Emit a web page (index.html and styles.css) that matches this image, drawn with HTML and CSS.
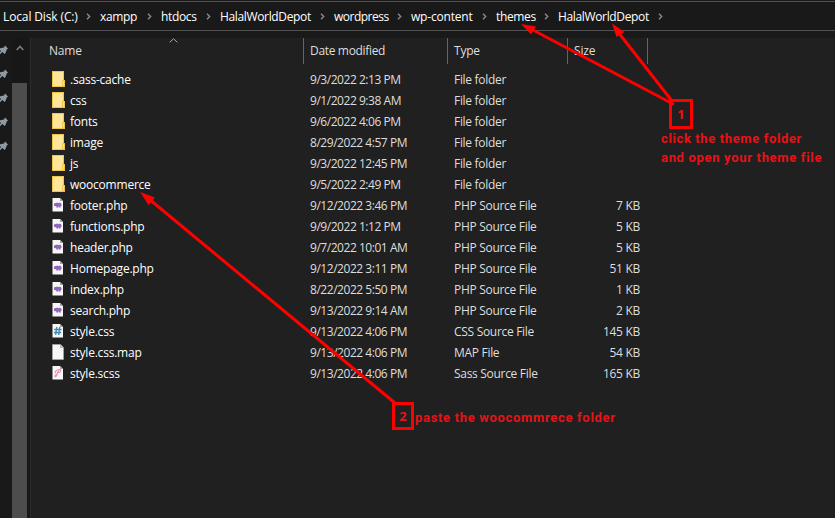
FILE: index.html
```html
<!DOCTYPE html>
<html lang="en">
<head>
<meta charset="utf-8">
<title>HalalWorldDepot</title>
<link rel="stylesheet" href="styles.css">
</head>
<body>
<svg class="defs" width="0" height="0">
  <symbol id="folder" viewBox="0 0 14 16"><path d="M0 0H12V9H13V16H0Z" fill="#f0c64a"/><path d="M1 1H11V15H1Z" fill="#ffe597"/><path d="M10.5 9.5H12.5V15H10.5Z" fill="#ffe08a" stroke="#e8bb3e" stroke-width=".7"/></symbol>
  <symbol id="page" viewBox="0 0 14 16"><path d="M.5 1H8L11 4V14.500H.5Z" fill="#f7f7f9"/><path d="M8 1V4H11Z" fill="#a2a2a6"/></symbol>
  <symbol id="php" viewBox="0 0 14 16"><use href="#page"/><path d="M2 7.300Q2 5.600 4 6Q5 5.200 6 6.100Q9 5.300 9.500 7.300V9H8.700V10.500H6.800V9.500H6.200V10.500H4.300V9.300H3.300V9H2Z" fill="#9068b8"/></symbol>
  <symbol id="css" viewBox="0 0 14 16"><use href="#page"/><path d="M4.700 4L3.700 12M7.700 4L6.700 12M2.300 6.500H9.500M2 9.500H9.200" fill="none" stroke="#3f88ab" stroke-width="1.300"/></symbol>
  <symbol id="map" viewBox="0 0 14 16"><path d="M.5 .5H8.500L11.500 3.500V15.500H.5Z" fill="#f7f7f7" stroke="#aaa" stroke-width=".7"/><path d="M8.500 .5V3.500H11.500" fill="#ccc" stroke="#999" stroke-width=".7"/></symbol>
  <symbol id="sass" viewBox="0 0 14 16"><use href="#page"/><path d="M4 8C2 7 4.500 4.500 7.500 4.500C10 5 8.500 7.500 6 7.500M6.500 5.500L5 9C5.500 10.500 4 12 3 11.500C2.500 10.500 3.800 9.800 5 9.300" fill="none" stroke="#f08aaa" stroke-width="1.100"/></symbol>
  <symbol id="pin" viewBox="0 0 9 11"><path d="M5 .5L8 3.500L6.800 4.500L5.500 8L4.500 9L2.500 7L-1 10L-1 8.500L1 6L-1 4L1 3L4 2.500Z" fill="#8e99a4"/></symbol>
  <symbol id="chev" viewBox="0 0 5 7"><path d="M1 .7L3.700 3.500L1 6.300" fill="none" stroke="#8a8a8a" stroke-width="1.400"/></symbol>
</svg>
<div class="window">
  <nav class="address">
    <span class="crumb c1"><span>Local Disk (C:)</span><svg><use href="#chev"/></svg></span>
    <span class="crumb c2"><span>xampp</span><svg><use href="#chev"/></svg></span>
    <span class="crumb c3"><span>htdocs</span><svg><use href="#chev"/></svg></span>
    <span class="crumb c4"><span>HalalWorldDepot</span><svg><use href="#chev"/></svg></span>
    <span class="crumb c5"><span>wordpress</span><svg><use href="#chev"/></svg></span>
    <span class="crumb c6"><span>wp-content</span><svg><use href="#chev"/></svg></span>
    <span class="crumb c7"><span>themes</span><svg><use href="#chev"/></svg></span>
    <span class="crumb c4"><span>HalalWorldDepot</span><svg><use href="#chev"/></svg></span>
  </nav>
  <div class="body">
    <aside class="pins">
      <svg><use href="#pin"/></svg><svg><use href="#pin"/></svg><svg><use href="#pin"/></svg><svg><use href="#pin"/></svg><svg><use href="#pin"/></svg>
    </aside>
    <div class="scrollbar"><div class="up"><svg width="8" height="6"><path d="M.7 5L4 1.500L7.300 5" fill="none" stroke="#7b7b7b" stroke-width="1.600"/></svg></div><div class="thumb"></div></div>
    <main class="files">
      <div class="head">
        <span class="name">Name<svg class="sort" width="9" height="5"><path d="M.7 4.300L4.500 .8L8.300 4.300" fill="none" stroke="#aaa"/></svg></span><span class="date">Date modified</span><span>Type</span><span>Size</span>
      </div>
      <div class="row"><svg><use href="#folder"/></svg><b>.sass-cache</b><span class="date">9/3/2022 2:13 PM</span><span>File folder</span><i></i></div>
      <div class="row"><svg><use href="#folder"/></svg><b>css</b><span class="date">9/1/2022 9:38 AM</span><span>File folder</span><i></i></div>
      <div class="row"><svg><use href="#folder"/></svg><b>fonts</b><span class="date">9/6/2022 4:06 PM</span><span>File folder</span><i></i></div>
      <div class="row"><svg><use href="#folder"/></svg><b>image</b><span class="date">8/29/2022 4:57 PM</span><span>File folder</span><i></i></div>
      <div class="row"><svg><use href="#folder"/></svg><b>js</b><span class="date">9/3/2022 12:45 PM</span><span>File folder</span><i></i></div>
      <div class="row"><svg><use href="#folder"/></svg><b>woocommerce</b><span class="date">9/5/2022 2:49 PM</span><span>File folder</span><i></i></div>
      <div class="row"><svg><use href="#php"/></svg><b>footer.php</b><span class="date">9/12/2022 3:46 PM</span><span>PHP Source File</span><i>7 KB</i></div>
      <div class="row"><svg><use href="#php"/></svg><b>functions.php</b><span class="date">9/9/2022 1:12 PM</span><span>PHP Source File</span><i>5 KB</i></div>
      <div class="row"><svg><use href="#php"/></svg><b>header.php</b><span class="date">9/7/2022 10:01 AM</span><span>PHP Source File</span><i>5 KB</i></div>
      <div class="row"><svg><use href="#php"/></svg><b>Homepage.php</b><span class="date">9/12/2022 3:11 PM</span><span>PHP Source File</span><i>51 KB</i></div>
      <div class="row"><svg><use href="#php"/></svg><b>index.php</b><span class="date">8/22/2022 5:50 PM</span><span>PHP Source File</span><i>1 KB</i></div>
      <div class="row"><svg><use href="#php"/></svg><b>search.php</b><span class="date">9/13/2022 9:14 AM</span><span>PHP Source File</span><i>2 KB</i></div>
      <div class="row"><svg><use href="#css"/></svg><b>style.css</b><span class="date">9/13/2022 4:06 PM</span><span>CSS Source File</span><i>145 KB</i></div>
      <div class="row"><svg><use href="#map"/></svg><b>style.css.map</b><span class="date">9/13/2022 4:06 PM</span><span>MAP File</span><i>54 KB</i></div>
      <div class="row"><svg><use href="#sass"/></svg><b>style.scss</b><span class="date">9/13/2022 4:06 PM</span><span>Sass Source File</span><i>165 KB</i></div>
    </main>
  </div>
  <svg class="arrows" width="835" height="518" fill="#f00" stroke="#f00">
    <path d="M674 104.500L531 29M672 101L618 32M395 403L149 199" fill="none" stroke-width="3"/>
    <path stroke="none" d="M521 24L536 26.500L531 34.500ZM612 23.500L624.500 32L616.500 37ZM140 192L155 197.500L148.500 205Z"/>
  </svg>
  <div class="step one">1</div>
  <div class="note note-one"><div class="l1">click the theme folder</div><div class="l2">and open your theme file</div></div>
  <div class="step two">2</div>
  <div class="note note-two">paste the woocommrece folder</div>
</div>
</body>
</html>
```
FILE: styles.css
```css
body { margin: 0; background: #191919; }
.defs { position: absolute; }
.window {
  position: relative;
  width: 835px;
  height: 518px;
  overflow: hidden;
  display: flex;
  flex-direction: column;
  font: 12px/21px "Open Sans", "Noto Sans", sans-serif;
  color: #dedede;
  white-space: nowrap;
}
.address {
  box-sizing: border-box;
  height: 30px;
  margin-top: 1px;
  padding-left: 3px;
  display: flex;
  align-items: center;
  border-top: 1px solid #535353;
  border-bottom: 1px solid #535353;
  color: #fff;
}
.crumb { display: flex; align-items: center; flex: none; letter-spacing: -.35px; }
.crumb svg { width: 5px; height: 7px; margin-left: auto; margin-right: 9px; }
.c1 { width: 97px; letter-spacing: -.13px; }
.c2 { width: 61px; }
.c3 { width: 59px; }
.c4 { width: 114px; }
.c5 { width: 77px; letter-spacing: -.5px; }
.c6 { width: 85px; letter-spacing: -.2px; }
.c7 { width: 62px; }
.body { flex: 1; display: flex; margin-top: 7px; }
.pins { width: 12px; display: flex; flex-direction: column; gap: 13px; padding-top: 7px; box-sizing: border-box; }
.pins svg { width: 9px; height: 11px; flex: none; }
.scrollbar { width: 16px; background: #171717; display: flex; flex-direction: column; margin-right: 2px; }
.up { height: 45px; text-align: center; line-height: 18px; padding-right: 1px; }
.thumb { flex: 1; background: #4d4d4d; width: 15px; }
.files { flex: 1; background: #202020; border-left: 1px solid #2b2b2b; }
.head, .row { display: grid; }
.head { grid-template-columns: 273px 144px 120px 80px; height: 25px; line-height: 26px; margin-bottom: 6px; letter-spacing: -.2px; }
.head span { border-right: 1px solid #636363; box-sizing: border-box; padding-left: 6px; }
.head .date { letter-spacing: -.33px; }
.head .name { padding-left: 18px; position: relative; }
.sort { position: absolute; left: 138px; top: 0; }
.row { grid-template-columns: 18px 240px 144px 120px 66px; padding-left: 21px; height: 21px; letter-spacing: -.3px; }
.row svg { width: 14px; height: 16px; margin-top: 2px; }
.row b { font-weight: 400; color: #fff; letter-spacing: -.22px; }
.row .date { letter-spacing: -.46px; }
.row i { font-style: normal; text-align: right; }
.arrows { position: absolute; left: 0; top: 0; }
.step { position: absolute; box-sizing: border-box; border: 3px solid #f00; color: #e81216; font: bold 13px/24px "Noto Sans", sans-serif; text-align: center; }
.one { left: 669px; top: 99px; width: 24px; height: 30px; }
.two { left: 392px; top: 402px; width: 22px; height: 28px; line-height: 22px; }
.note { position: absolute; font: bold 13px/19px Roboto, sans-serif; color: #e81216; letter-spacing: .68px; }
.note-one { left: 661px; top: 129px; }
.l1 { letter-spacing: .62px; }
.note-two { left: 415px; top: 408px; }
```
